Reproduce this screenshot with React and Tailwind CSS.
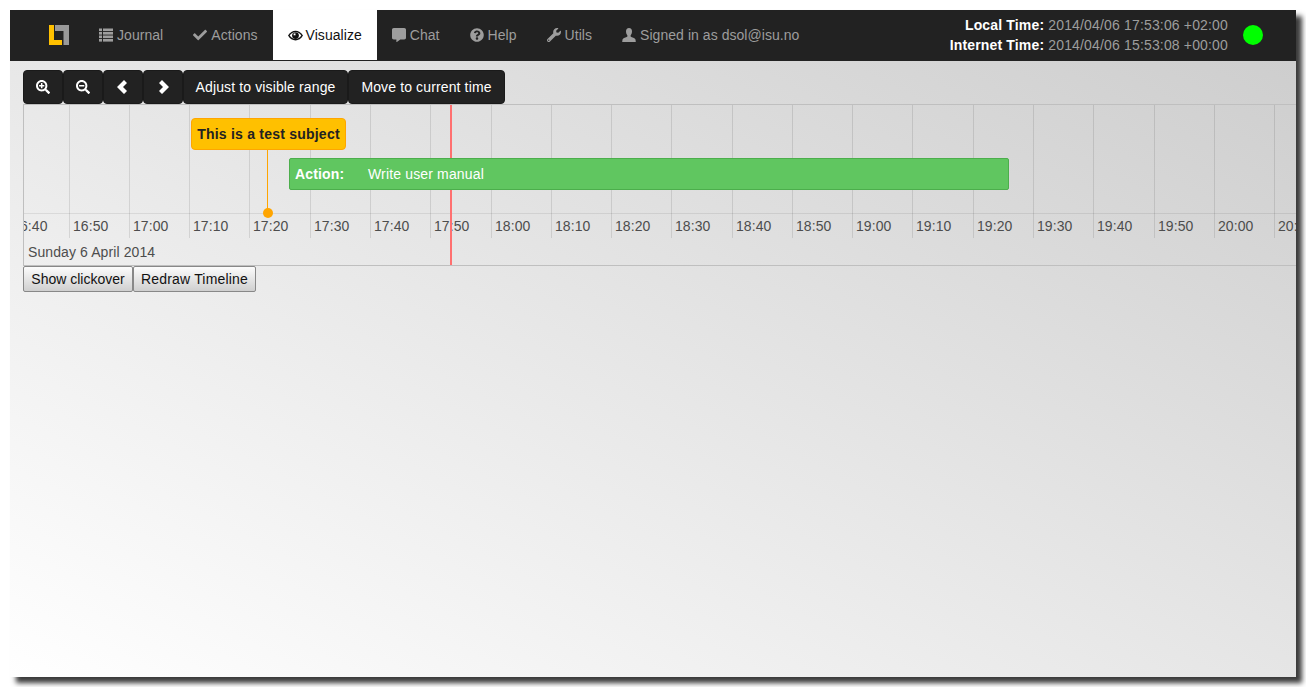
import React from "react";
import { FaCheck, FaCommentAlt, FaQuestionCircle, FaWrench, FaSearchPlus, FaSearchMinus } from "react-icons/fa";

const labels = ["16:40","16:50","17:00","17:10","17:20","17:30","17:40","17:50","18:00","18:10","18:20","18:30","18:40","18:50","19:00","19:10","19:20","19:30","19:40","19:50","20:00","20:10"];
const ticks = [46, 106, 166, 226, 287, 347, 407, 468, 528, 588, 648, 709, 769, 829, 889, 950, 1010, 1070, 1131, 1191, 1251];

const ListIcon = ({ size }) => (
  <svg width={size} height={size} viewBox="0 0 14 14" fill="currentColor">
    {[0.5, 4, 7.5, 11].map((y) => (
      <g key={y}>
        <rect x="0" y={y} width="3" height="2.6" />
        <rect x="4" y={y} width="10" height="2.6" />
      </g>
    ))}
  </svg>
);

const EyeIcon = ({ size }) => (
  <svg width={size} height={size} viewBox="0 0 16 16">
    <path d="M0 8C2 4.3 5 2.8 8 2.8S14 4.3 16 8c-2 3.7-5 5.2-8 5.2S2 11.7 0 8z" fill="#111" />
    <path d="M1.8 8C3.4 5.6 5.6 4.3 8 4.3s4.600 1.300 6.200 3.700c-1.600 2.400-3.800 3.700-6.200 3.700S3.400 10.400 1.800 8z" fill="#fff" />
    <circle cx="8" cy="8" r="3.600" fill="#111" />
    <rect x="6" y="5.800" width="2" height="2" fill="#fff" />
  </svg>
);

const UserIcon = ({ size }) => (
  <svg width={size} height={size} viewBox="0 0 14 14" fill="currentColor">
    <path d="M7 0C5 0 4 1.500 4 3.500c0 1.500.6 3 1.400 3.900v1.200C4 9.600 1 10 .5 11.500L.2 14h13.600l-.3-2.500C13 10 10 9.600 8.600 8.600V7.400C9.400 6.500 10 5 10 3.500 10 1.500 9 0 7 0z" />
  </svg>
);

const ChevronLeft = () => (
  <svg width="12" height="14" viewBox="0 0 12 14" fill="currentColor">
    <path d="M7 0l3 3-4 4 4 4-3 3-7-7z" />
  </svg>
);

const ChevronRight = () => (
  <svg width="12" height="14" viewBox="0 0 12 14" fill="currentColor">
    <path d="M5 0L2 3l4 4-4 4 3 3 7-7z" />
  </svg>
);

function NavItem({ icon: Icon, label, active }) {
  return (
    <a className={"flex items-center h-[50px] px-[15px] tracking-[0.05px] " + (active ? "bg-white text-[#111]" : "text-[#9d9d9d]")}>
      <span className="w-[18px] flex shrink-0">
        <Icon size={active ? 15 : 14} />
      </span>
      <span>{label}</span>
    </a>
  );
}

function DarkBtn({ children, w }) {
  return (
    <button className={"flex items-center justify-center h-[34px] bg-[#222] text-white text-sm rounded-[4px] border border-[#1a1a1a] tracking-[0.13px] " + w}>
      {children}
    </button>
  );
}

function GreyBtn({ children, w }) {
  return (
    <button className={"h-[26px] border border-[#888] rounded-[2px] bg-[linear-gradient(to_bottom,#fcfcfc,#cfcfcf)] text-[#111] text-sm " + w}>
      {children}
    </button>
  );
}

export default function App() {
  return (
    <div className="h-[687px] w-[1306px] bg-white p-[10px] font-['Liberation_Sans',Arial,sans-serif] text-sm overflow-hidden">
      <div className="h-[667px] w-[1286px] flex flex-col bg-[linear-gradient(to_bottom_left,#cccccc,#ffffff)] shadow-[6px_6px_5px_#3c3c3c]">
        <header className="flex items-center justify-between h-[51px] bg-[#222] border-b border-[#222] shrink-0">
          <div className="flex items-center">
            <div className="w-[74px] flex justify-end pr-[15px]">
              <svg width="20" height="20" viewBox="0 0 20 20">
                <path d="M0 0h5v15h8v5H0z" fill="#ffc000" />
                <path d="M6 0h14v20h-5.500V6H6z" fill="#999" />
              </svg>
            </div>
            <NavItem icon={ListIcon} label="Journal" />
            <NavItem icon={FaCheck} label="Actions" />
            <NavItem icon={EyeIcon} label="Visualize" active />
            <NavItem icon={FaCommentAlt} label="Chat" />
            <NavItem icon={FaQuestionCircle} label="Help" />
            <NavItem icon={FaWrench} label="Utils" />
            <NavItem icon={UserIcon} label="Signed in as dsol@isu.no" />
          </div>
          <div className="flex items-center pr-[33px]">
            <div className="text-right leading-[20px] tracking-[0.16px]">
              <div className="text-[#9d9d9d]"><b className="text-white">Local Time:</b> 2014/04/06 17:53:06 +02:00</div>
              <div className="text-[#9d9d9d]"><b className="text-white">Internet Time:</b> 2014/04/06 15:53:08 +00:00</div>
            </div>
            <div className="w-5 h-5 rounded-full bg-[#0f0] ml-[15px]" />
          </div>
        </header>

        <div className="pl-[13px] pt-[9px] flex flex-col flex-1">
          <div className="flex">
            <DarkBtn w="w-10"><FaSearchPlus size={14} /></DarkBtn>
            <DarkBtn w="w-10"><FaSearchMinus size={14} /></DarkBtn>
            <DarkBtn w="w-10"><ChevronLeft /></DarkBtn>
            <DarkBtn w="w-10"><ChevronRight /></DarkBtn>
            <DarkBtn w="w-[165px]">Adjust to visible range</DarkBtn>
            <DarkBtn w="w-[157px]">Move to current time</DarkBtn>
          </div>

          <div className="relative h-[162px] border-y border-l border-[#bfbfbf] overflow-hidden text-[#4d4d4d]">
            <div className="absolute left-0 right-0 top-[108px] h-px bg-black/[0.08]" />
            {ticks.map((x) => (
              <div key={x} className="absolute top-0 h-[133px] w-px bg-black/[0.1]" style={{ left: x - 1 }} />
            ))}
            {labels.map((t, i) => (
              <span key={t} className="absolute top-[113px] leading-[16px] whitespace-nowrap tracking-[0.1px]" style={{ left: i === 0 ? -12 : ticks[i - 1] + 2.9 }}>{t}</span>
            ))}
            <span className="absolute left-[4px] top-[139px] leading-[16px] tracking-[0.1px]">Sunday 6 April 2014</span>

            <div className="absolute left-[426px] top-0 bottom-0 w-[2px] bg-[#ff7070]" />
            <div className="absolute left-[243px] top-[44px] h-[64px] w-px bg-[#ffa500]" />
            <div className="absolute left-[239px] top-[103px] w-[10px] h-[10px] rounded-full bg-[#ffa500]" />
            <div className="absolute left-[167px] top-[13px] w-[155px] h-[32px] rounded-[4px] bg-[#ffc000] border border-[#ffa500] flex items-center justify-center font-bold text-[#222] whitespace-nowrap tracking-[0.22px]">
              This is a test subject
            </div>
            <div className="absolute left-[265px] top-[53px] w-[720px] h-[32px] rounded-[2px] bg-[#60c660] border border-[#4cae4c] flex items-center text-white pl-[5px] whitespace-nowrap tracking-[0.15px]">
              <b className="w-[73px]">Action:</b>
              <span>Write user manual</span>
            </div>
          </div>

          <div className="flex">
            <GreyBtn w="w-[110px]">Show clickover</GreyBtn>
            <GreyBtn w="w-[123px] tracking-[0.18px]">Redraw Timeline</GreyBtn>
          </div>
        </div>
      </div>
    </div>
  );
}
